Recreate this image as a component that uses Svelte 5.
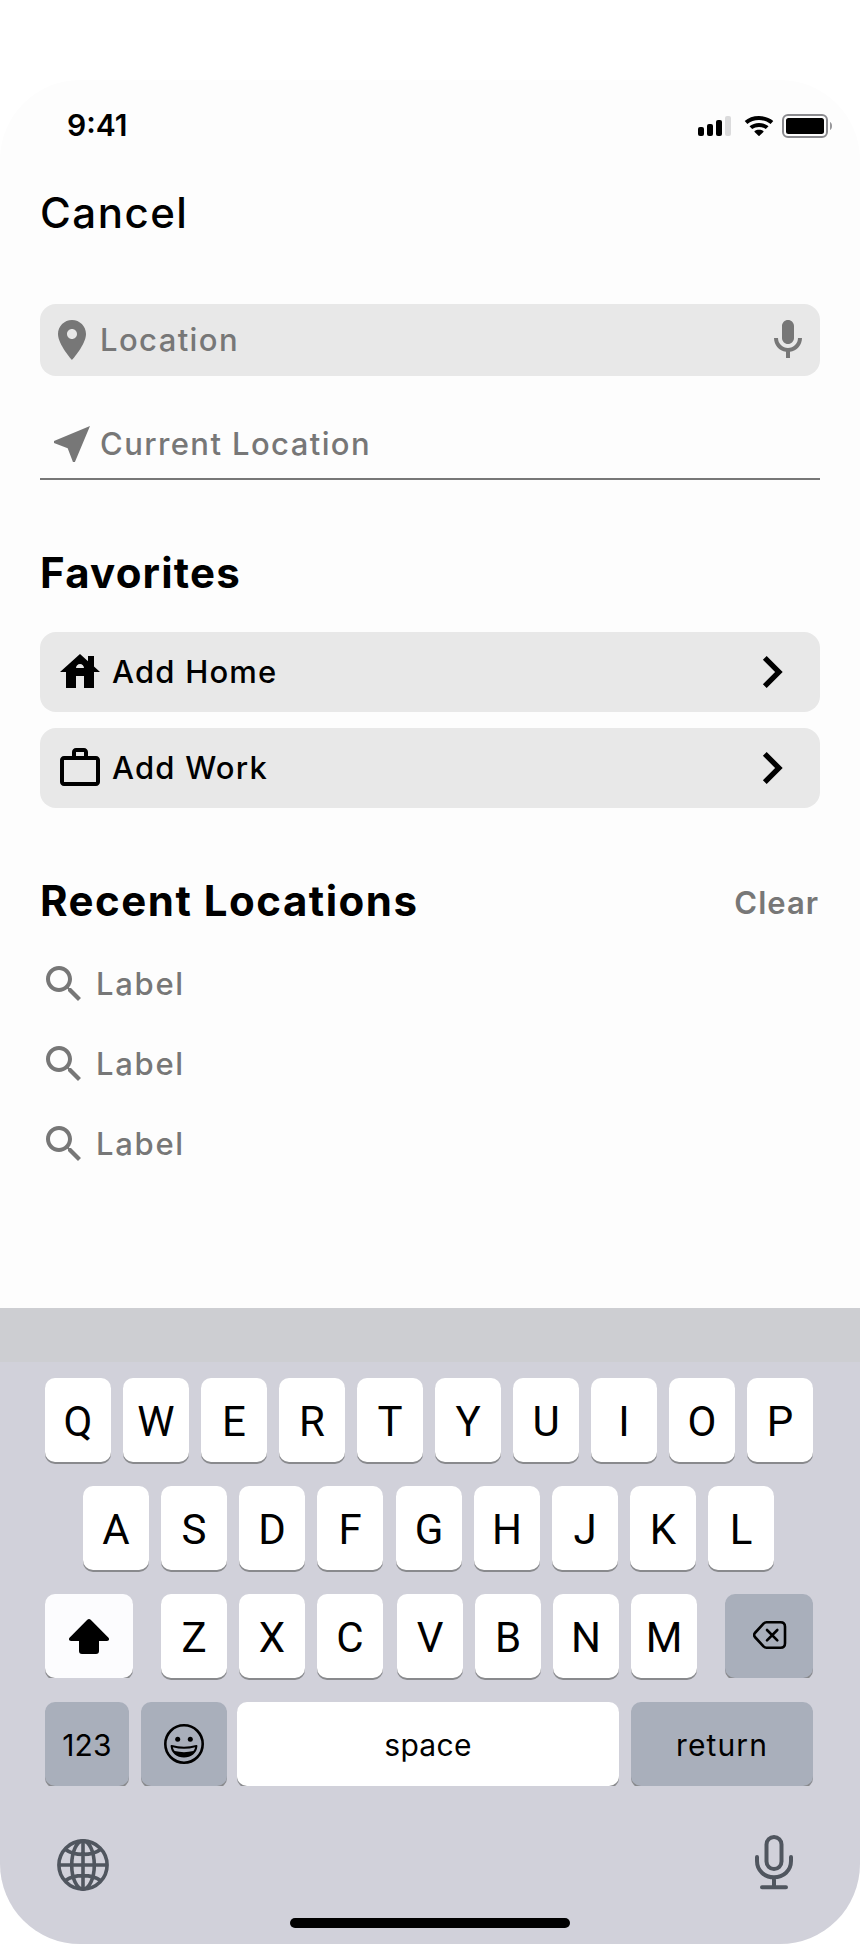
<script lang="ts">
  type Favorite = { label: string; icon: 'home' | 'work' };

  const favorites: Favorite[] = [
    { label: 'Add Home', icon: 'home' },
    { label: 'Add Work', icon: 'work' }
  ];

  let recents = $state(['Label', 'Label', 'Label']);

  const topRow = 'QWERTYUIOP'.split('');
  const middleRow = ['ASDF'.split(''), 'GHJKL'.split('')];
  const bottomRow = ['ZXC'.split(''), 'VBNM'.split('')];

  const icons = {
    home: 'M19 9.3V4h-3v2.6L12 3 2 12h3v8h5v-6h4v6h5v-8h3l-3-2.7zm-9 .7c0-1.1.9-2 2-2s2 .9 2 2h-4z',
    work: 'M14 6V4h-4v2h4zM4 8v11h16V8H4zm16-2c1.11 0 2 .89 2 2v11c0 1.11-.89 2-2 2H4c-1.11 0-2-.89-2-2l.01-11c0-1.11.88-2 1.99-2h4V4c0-1.11.89-2 2-2h4c1.11 0 2 .89 2 2v2h4z',
    place: 'M12 2C8.13 2 5 5.13 5 9c0 5.25 7 13 7 13s7-7.75 7-13c0-3.87-3.13-7-7-7zm0 9.5c-1.38 0-2.5-1.12-2.5-2.5s1.12-2.5 2.5-2.5 2.5 1.12 2.5 2.5-1.12 2.5-2.5 2.5z',
    mic: 'M12 14c1.66 0 3-1.34 3-3V5c0-1.66-1.34-3-3-3S9 3.34 9 5v6c0 1.66 1.34 3 3 3zm5-3c0 2.76-2.24 5-5 5s-5-2.24-5-5H5c0 3.53 2.61 6.43 6 6.92V21h2v-3.08c3.39-.49 6-3.39 6-6.92h-2z',
    nearMe: 'M21 3 3 10.53v.98l6.84 2.65L12.48 21h.98L21 3z',
    search: 'M15.5 14h-.79l-.28-.27C15.41 12.59 16 11.11 16 9.5 16 5.91 13.09 3 9.5 3S3 5.91 3 9.5 5.91 16 9.5 16c1.61 0 3.09-.59 4.23-1.57l.27.28v.79l5 4.99L20.49 19l-4.99-5zm-6 0C7.01 14 5 11.99 5 9.5S7.01 5 9.5 5 14 7.01 14 9.5 11.99 14 9.5 14z',
    chevron: 'M10 6 8.59 7.41 13.17 12l-4.58 4.59L10 18l6-6z'
  };
</script>

{#snippet icon(name: keyof typeof icons, size = 48)}
  <svg class="icon" width={size} height={size} viewBox="0 0 24 24" fill="currentColor">
    <path d={icons[name]} />
  </svg>
{/snippet}

{#snippet keys(letters: string[])}
  <div class="keys">
    {#each letters as letter}
      <button class="key letter">{letter}</button>
    {/each}
  </div>
{/snippet}

<div class="phone">
  <div class="status-bar">
    <span class="time">9:41</span>
    <div class="indicators">
      <svg width="33" height="20" viewBox="0 0 33 20">
        <rect x="0" y="11" width="6" height="9" rx="2" />
        <rect x="9" y="8" width="6" height="12" rx="2" />
        <rect x="18" y="4" width="6" height="16" rx="2" />
        <rect x="27" y="0" width="6" height="20" rx="2" fill="#dbdbdc" />
      </svg>
      <svg class="wifi" width="30" height="20" viewBox="0 0 30 20">
        <path d="M15 0C20.800 0 25.800 1.900 29.300 5.100L26.600 8.100C23.500 5.400 19.500 4 15 4S6.500 5.400 3.400 8.100L.7 5.100C4.200 1.900 9.200 0 15 0z" />
        <path d="M15 7C18.700 7 22 8.300 24.500 10.300L21.800 13.100C20 11.700 17.600 10.900 15 10.900S10 11.700 8.200 13.100L5.500 10.300C8 8.300 11.300 7 15 7z" />
        <path d="M15 13.700C16.800 13.700 18.300 14.200 19.400 15.100Q19.700 15.500 19.400 15.900L15.500 19.700Q15 20.100 14.500 19.700L10.600 15.900Q10.300 15.500 10.600 15.100C11.700 14.200 13.200 13.700 15 13.700z" />
      </svg>
      <svg class="battery" width="50" height="24" viewBox="0 0 50 24">
        <rect x="1" y="1" width="44" height="22" rx="5" fill="none" stroke="#8a8a8e" stroke-width="2" />
        <rect x="4" y="4" width="38" height="16" rx="2.500" />
        <path d="M48 8c1.300.500 2 2 2 4s-.700 3.500-2 4z" fill="#98989b" />
      </svg>
    </div>
  </div>

  <main>
    <button class="cancel">Cancel</button>

    <div class="field">
      {@render icon('place')}
      <span class="field-label">Location</span>
      {@render icon('mic')}
    </div>

    <div class="current">
      {@render icon('nearMe')}
      <span class="current-label">Current Location</span>
    </div>

    <h2 class="favorites-title">Favorites</h2>
    <div class="favorites">
      {#each favorites as favorite}
        <button class="favorite">
          {@render icon(favorite.icon)}
          <span class="favorite-label">{favorite.label}</span>
          {@render icon('chevron', 64)}
        </button>
      {/each}
    </div>

    <div class="recent-header">
      <h2 class="recent-title">Recent Locations</h2>
      <button class="clear" onclick={() => (recents = [])}>Clear</button>
    </div>
    <ul class="recents">
      {#each recents as recent}
        <li>
          {@render icon('search')}
          <span class="recent-label">{recent}</span>
        </li>
      {/each}
    </ul>
  </main>

  <section class="keyboard">
    <div class="suggestions"></div>

    <div class="key-rows">
      <div class="key-row">
        {@render keys(topRow)}
      </div>

      <div class="key-row middle">
        {@render keys(middleRow[0])}
        {@render keys(middleRow[1])}
      </div>

      <div class="key-row bottom">
        <button class="key special shift" aria-label="shift">
          <svg width="40" height="35" viewBox="0 0 40 35">
            <path d="M18.300.800Q20-.800 21.700.800L39.500 18.800Q40.500 20 39.700 21.200Q39.200 22 37.800 22H30V32Q30 35 27 35H13Q10 35 10 32V22H2.200Q.8 22 .3 21.200Q-.500 20 .5 18.800z" />
          </svg>
        </button>
        <div class="bottom-letters">
          {@render keys(bottomRow[0])}
          {@render keys(bottomRow[1])}
        </div>
        <button class="key special gray" aria-label="delete">
          <svg class="delete" width="34" height="28" viewBox="0 0 34 28" fill="none" stroke="#000" stroke-width="2.600" stroke-linejoin="round" stroke-linecap="round">
            <path d="M13.500 1.300H27.500Q32 1.300 32 5.800V22.200Q32 26.700 27.500 26.700H13.500Q11.800 26.700 10.500 25.400L1.900 16Q.4 14 1.900 12L10.500 2.600Q11.800 1.300 13.500 1.300z" />
            <path d="M14 9 24.300 19.400M24.300 9 14 19.400" />
          </svg>
        </button>
      </div>

      <div class="key-row actions">
        <button class="key special gray numbers">123</button>
        <button class="key special gray emoji" aria-label="emoji">
          <svg width="40" height="40" viewBox="0 0 40 40">
            <circle cx="20" cy="20" r="18.700" fill="none" stroke="#000" stroke-width="2.600" />
            <circle cx="13.700" cy="15.300" r="2.500" />
            <circle cx="26.300" cy="15.300" r="2.500" />
            <path fill-rule="evenodd" d="M7.800 21Q20 24.500 32.200 21Q33.500 20.700 33.400 22.200C32.800 29 27.200 33.500 20 33.500S7.200 29 6.600 22.200Q6.500 20.700 7.800 21zM8.800 23.200Q9.200 25.400 10.600 27Q20 29.300 29.400 27Q30.800 25.400 31.200 23.200Q20 26.300 8.800 23.200z" />
          </svg>
        </button>
        <button class="key special space">space</button>
        <button class="key special gray return">return</button>
      </div>
    </div>

    <div class="keyboard-footer">
      <svg class="globe" width="52" height="52" viewBox="0 0 52 52" fill="none" stroke="#50565f" stroke-width="3.600">
        <circle cx="26" cy="26" r="24.100" />
        <ellipse cx="26" cy="26" rx="11.300" ry="24.100" />
        <path d="M26 2V50M2 26H50M8.500 10.500Q15 15.400 26 15.400T43.500 10.500M8.500 41.500Q15 36.600 26 36.600T43.500 41.500" />
      </svg>
      <svg width="38" height="55" viewBox="0 0 38 55" fill="none" stroke="#50565f" stroke-width="4" stroke-linecap="round">
        <rect x="11.500" y="2" width="15" height="32" rx="7.500" />
        <path d="M2 22V26C2 35.500 9.500 42.300 19 42.300S36 35.500 36 26V22M19 43V52M7 52.300H31" />
      </svg>
    </div>
    <div class="home-indicator"></div>
  </section>
</div>

<style>
  :global(body) {
    margin: 0;
    background: #fff;
  }

  .phone {
    box-sizing: border-box;
    display: flex;
    flex-direction: column;
    width: 860px;
    height: 1864px;
    margin-top: 80px;
    background: #fdfdfd;
    border-radius: 80px;
    overflow: hidden;
    color: #000;
    font-family: Inter, 'Liberation Sans', sans-serif;
  }

  button {
    margin: 0;
    padding: 0;
    border: 0;
    background: none;
    color: inherit;
    font: inherit;
    white-space: nowrap;
  }

  svg {
    display: block;
    flex: none;
  }

  .status-bar {
    display: flex;
    justify-content: space-between;
    align-items: center;
    height: 60px;
    padding: 32px 28px 0 67px;
    box-sizing: border-box;
    margin-bottom: 44px;
  }

  .time {
    font-size: 30px;
    font-weight: 600;
    line-height: 28px;
    margin-top: -2px;
    letter-spacing: 0;
  }

  .indicators {
    display: flex;
    align-items: center;
  }

  .wifi {
    margin-left: 13px;
  }

  .battery {
    margin-left: 8px;
  }

  main {
    display: flex;
    flex-direction: column;
    height: 1124px;
    padding: 0 40px;
  }

  .cancel {
    align-self: flex-start;
    height: 58px;
    font-size: 42px;
    font-weight: 500;
    line-height: 58px;
    letter-spacing: 1.5px;
  }

  .field,
  .current {
    display: flex;
    align-items: center;
    height: 72px;
    padding: 0 8px;
    box-sizing: border-box;
    color: #777;
    font-size: 31px;
    font-weight: 500;
    letter-spacing: 1.4px;
  }

  .field {
    margin-top: 62px;
    border-radius: 16px;
    background: #e8e8e8;
  }

  .field-label,
  .current-label,
  .favorite-label,
  .recent-label {
    line-height: 48px;
    padding-bottom: 1px;
  }

  .field-label {
    flex: 1;
    padding-left: 4px;
  }

  .current {
    margin-top: 32px;
    border-bottom: 2px solid #777;
    padding-top: 2px;
  }

  .current-label {
    padding-left: 4px;
  }

  h2 {
    margin: 0;
    font-size: 42px;
    font-weight: 700;
    line-height: 48px;
  }

  .favorites-title {
    margin-top: 69px;
    letter-spacing: 1.2px;
  }

  .recent-title {
    letter-spacing: 1.5px;
  }

  .favorites {
    display: flex;
    flex-direction: column;
    gap: 16px;
    margin-top: 35px;
  }

  .favorite {
    display: flex;
    align-items: center;
    height: 80px;
    padding: 0 16px;
    border-radius: 16px;
    background: #e8e8e8;
    font-size: 31px;
    font-weight: 500;
    letter-spacing: 1.2px;
    text-align: left;
  }

  .favorite-label {
    flex: 1;
    padding-left: 8px;
  }

  .recent-header {
    display: flex;
    justify-content: space-between;
    align-items: flex-start;
    margin-top: 69px;
  }

  .clear {
    height: 52px;
    padding-right: 1px;
    color: #777;
    font-size: 31px;
    font-weight: 600;
    line-height: 52px;
    letter-spacing: 1px;
  }

  .recents {
    margin: 15px 0 0;
    padding: 0;
    list-style: none;
  }

  .recents li {
    display: flex;
    align-items: center;
    gap: 8px;
    height: 80px;
    color: #777;
    font-size: 31px;
    font-weight: 500;
    letter-spacing: 1.7px;
  }

  .keyboard {
    flex: 1;
    background: #d1d1da;
  }

  .suggestions {
    height: 54px;
    background: #cdced2;
  }

  .key-rows {
    display: flex;
    flex-direction: column;
    gap: 24px;
    padding: 16px 47px 0 45px;
  }

  .key-row,
  .keys {
    display: flex;
    gap: 12px;
  }

  .key-row.middle {
    gap: 13px;
    padding-left: 38px;
  }

  .key-row.bottom {
    justify-content: space-between;
    gap: 0;
  }

  .bottom-letters {
    display: flex;
    gap: 14px;
  }

  .key {
    display: flex;
    justify-content: center;
    align-items: center;
    box-sizing: border-box;
    height: 84px;
    border-radius: 10px;
    background: #fff;
    box-shadow: 0 2px 0 #898a8d;
  }

  .letter {
    width: 66px;
    padding-top: 4px;
    font-family: Roboto, sans-serif;
    font-size: 42px;
    line-height: 80px;
  }

  /* the shadow only shows in the rounded corners of these keys */
  .special {
    width: 88px;
    clip-path: inset(0);
    font-size: 30px;
  }

  .shift {
    background: #fcfcfe;
  }

  .gray {
    background: #a9afbb;
  }

  .delete {
    margin-top: -2px;
    margin-left: 1px;
  }

  .numbers {
    width: 84px;
    padding-top: 2px;
    letter-spacing: 0.2px;
  }

  .emoji {
    width: 86px;
  }

  .space {
    width: 382px;
    margin-left: -2px;
    padding-top: 2px;
    letter-spacing: 0.3px;
  }

  .return {
    width: 182px;
    padding-top: 2px;
    letter-spacing: 1.1px;
  }

  .keyboard-footer {
    display: flex;
    justify-content: space-between;
    align-items: center;
    height: 64px;
    padding: 0 67px 0 57px;
    margin-top: 44px;
  }

  .globe {
    margin-top: 5px;
  }

  .home-indicator {
    width: 280px;
    height: 10px;
    margin: 24px auto 0;
    border-radius: 5px;
    background: #000;
  }
</style>
